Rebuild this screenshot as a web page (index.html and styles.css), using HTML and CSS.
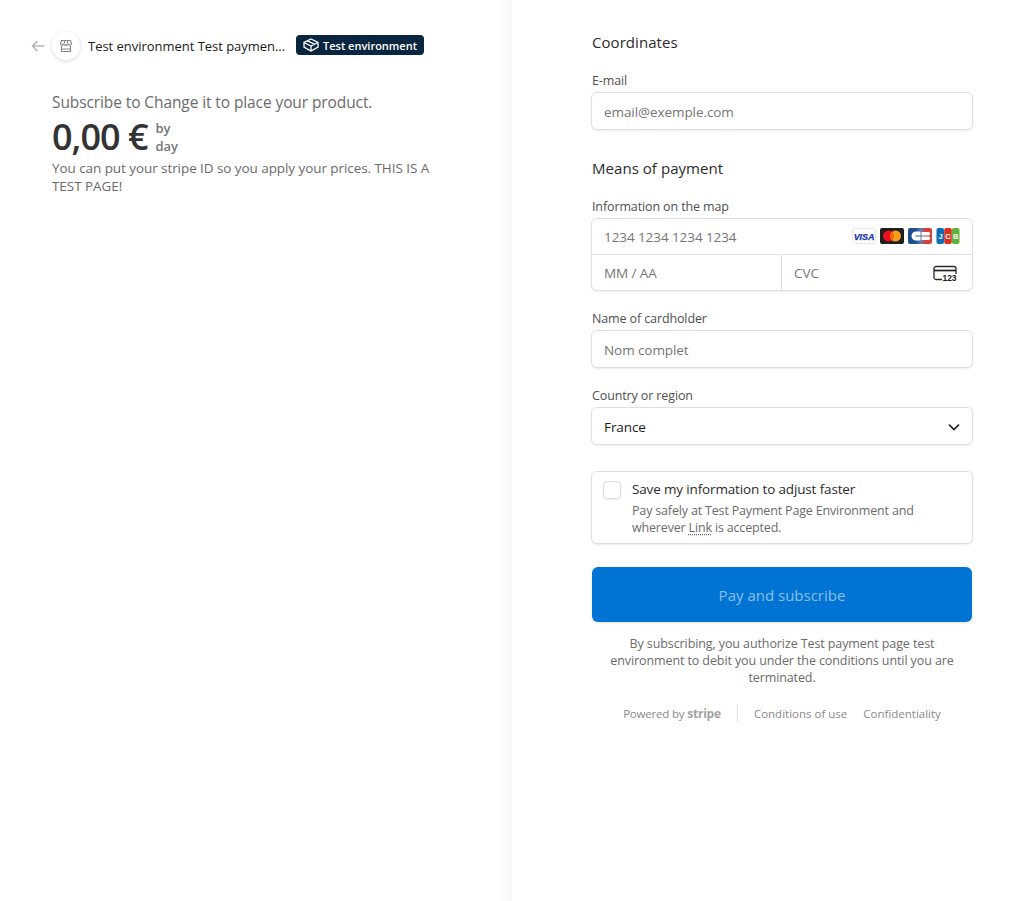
FILE: index.html
```html
<!DOCTYPE html>
<html lang="en">
<head>
    <meta charset="UTF-8">
    <title>Test payment page</title>
    <link rel="stylesheet" href="styles.css">
</head>
<body>
    <div class="page">
        <div class="summary">
            <div class="header">
                <svg class="back" width="14" height="12" viewBox="0 0 14 12" fill="none" stroke="#b5b5b5" stroke-width="1.6">
                    <path d="M13.5 6H1.5M6.5 1L1.5 6l5 5"/>
                </svg>
                <div class="logo">
                    <svg width="14" height="14" viewBox="0 0 14 14" fill="none" stroke="#8a8a8a" stroke-width="1.2">
                        <path d="M2.5 1.5h9l1 3.2a1.6 1.6 0 0 1-3 .6 1.7 1.7 0 0 1-2.5.4 1.7 1.7 0 0 1-2.5-.4 1.6 1.6 0 0 1-3-.6z"/>
                        <path d="M2.5 7v5.5h9V7M2.5 10h9M5.5 1.5v3M8.5 1.5v3"/>
                    </svg>
                </div>
                <span class="merchant">Test environment Test paymen...</span>
                <span class="badge">
                    <svg width="16" height="14" viewBox="0 0 16 14" fill="none" stroke="#fff" stroke-width="1.3">
                        <path d="M8 1l7 3.5v4.5L8 13 1 9V4.5zM1 4.5L8 8l7-3.5M8 8v5M4.5 2.8L11.5 6.2"/>
                    </svg>
                    Test environment
                </span>
            </div>
            <div class="product">
                <div class="product-name">Subscribe to Change it to place your product.</div>
                <div class="price-row">
                    <span class="price">0,00 €</span>
                    <span class="period">by<br>day</span>
                </div>
                <p class="description">You can put your stripe ID so you apply your prices. THIS IS A TEST PAGE!</p>
            </div>
        </div>

        <div class="checkout">
            <h2 class="section-title">Coordinates</h2>
            <label class="field-label">E-mail</label>
            <div class="input">email@exemple.com</div>

            <h2 class="section-title payment-title">Means of payment</h2>
            <label class="field-label">Information on the map</label>
            <div class="card-box">
                <div class="card-number">
                    <span>1234 1234 1234 1234</span>
                    <span class="brands">
                        <svg width="24" height="16" viewBox="0 0 24 16">
                            <rect x="0.5" y="0.5" width="23" height="15" rx="2" fill="#fff" stroke="#e6e6e6"/>
                            <text x="12" y="11.5" class="visa-text">VISA</text>
                        </svg>
                        <svg width="24" height="16" viewBox="0 0 24 16">
                            <rect width="24" height="16" rx="2" fill="#1f1f1f"/>
                            <circle cx="8.5" cy="8" r="5.5" fill="#e8101c"/>
                            <circle cx="15.5" cy="8" r="5.5" fill="#f79e1b"/>
                            <path d="M12 3.8a5.5 5.5 0 0 1 0 8.4 5.5 5.5 0 0 1 0-8.4z" fill="#ff5f00"/>
                        </svg>
                        <svg width="24" height="16" viewBox="0 0 24 16">
                            <defs>
                                <linearGradient id="cb" x1="0" x2="1" y1="0" y2="0">
                                    <stop offset="0.3" stop-color="#1d4f91"/>
                                    <stop offset="0.55" stop-color="#5f7fae"/>
                                    <stop offset="0.72" stop-color="#d8403c"/>
                                </linearGradient>
                            </defs>
                            <rect width="24" height="16" rx="2" fill="url(#cb)"/>
                            <path d="M12.5 3.5H8a4.5 4.5 0 0 0 0 9h4.5V8.4H7.5V7.6h5z" fill="#fff"/>
                            <path d="M13.5 4h7a1.8 1.8 0 0 1 0 3.6h-7zM13.5 8.4h7a1.8 1.8 0 0 1 0 3.6h-7z" fill="#fff"/>
                        </svg>
                        <svg width="24" height="16" viewBox="0 0 24 16">
                            <rect x="0.5" width="7.6" height="16" rx="2" fill="#0f6fb5"/>
                            <rect x="8.2" width="7.6" height="16" rx="2" fill="#d8321f"/>
                            <rect x="15.9" width="7.6" height="16" rx="2" fill="#5fb13d"/>
                            <text x="4.5" y="11" class="jcb-text">J</text>
                            <text x="12" y="11" class="jcb-text">C</text>
                            <text x="19.7" y="11" class="jcb-text">B</text>
                        </svg>
                    </span>
                </div>
                <div class="card-row">
                    <div class="card-cell expiry">MM / AA</div>
                    <div class="card-cell cvc">
                        <span>CVC</span>
                        <svg width="24" height="17" viewBox="0 0 24 17" fill="none">
                            <path d="M9 14.5H3a2 2 0 0 1-2-2v-9a2 2 0 0 1 2-2h18a2 2 0 0 1 2 2V9" stroke="#2a2a2a" stroke-width="1.3"/>
                            <path d="M1 5.5h22" stroke="#2a2a2a" stroke-width="1.8"/>
                            <text x="16.5" y="16" class="cvc-text">123</text>
                        </svg>
                    </div>
                </div>
            </div>

            <label class="field-label">Name of cardholder</label>
            <div class="input">Nom complet</div>

            <label class="field-label">Country or region</label>
            <div class="input select">
                <span>France</span>
                <svg width="12" height="8" viewBox="0 0 12 8" fill="none" stroke="#1a1a1a" stroke-width="1.6">
                    <path d="M1 1.5l5 5 5-5"/>
                </svg>
            </div>

            <div class="save-box">
                <span class="checkbox"></span>
                <div>
                    <div class="save-title">Save my information to adjust faster</div>
                    <div class="save-text">Pay safely at Test Payment Page Environment and<br>wherever <span class="link">Link</span> is accepted.</div>
                </div>
            </div>

            <button class="pay-button">Pay and subscribe</button>

            <p class="terms">By subscribing, you authorize Test payment page test environment to debit you under the conditions until you are terminated.</p>

            <div class="footer">
                <span class="powered">Powered by <b>stripe</b></span>
                <span class="divider"></span>
                <span>Conditions of use</span>
                <span>Confidentiality</span>
            </div>
        </div>
    </div>
</body>
</html>
```

FILE: styles.css
```css
* {
    box-sizing: border-box;
}
body {
    margin: 0;
    font-family: "Open Sans", "Noto Sans", sans-serif;
    color: #1a1a1a;
    background: #fff;
}
.page {
    display: flex;
    min-height: 901px;
}
.summary {
    width: 512px;
    padding: 32px 0 0 31px;
    background: linear-gradient(to left, #f9f9f9, #fff 16px);
}
.header {
    display: flex;
    align-items: center;
    height: 28px;
}
.back {
    margin-right: 7px;
}
.logo {
    width: 28px;
    height: 28px;
    border-radius: 50%;
    background: #fff;
    box-shadow: 0 1px 4px rgba(0, 0, 0, 0.16);
    display: flex;
    align-items: center;
    justify-content: center;
    margin-right: 8px;
}
.merchant {
    font-size: 13px;
    letter-spacing: -0.03px;
    color: #1a1a1a;
    width: 208px;
    white-space: nowrap;
}
.badge {
    display: flex;
    align-items: center;
    gap: 4px;
    height: 20px;
    margin-bottom: 2px;
    padding: 0 7px;
    border-radius: 4px;
    background: #0a2540;
    color: #fff;
    font-size: 11px;
    font-weight: 600;
    white-space: nowrap;
}
.product {
    padding: 31px 0 0 21px;
    width: 406px;
}
.product-name {
    font-size: 15.5px;
    line-height: 22px;
    letter-spacing: -0.1px;
    color: #6b6b6b;
}
.price-row {
    display: flex;
    align-items: center;
    gap: 8px;
    margin-top: 2px;
}
.price {
    font-size: 36px;
    line-height: 44px;
    font-weight: 600;
    letter-spacing: -1px;
    color: #333;
}
.period {
    font-size: 13px;
    line-height: 18px;
    font-weight: 600;
    color: #757575;
}
.description {
    margin: 0;
    font-size: 13.5px;
    line-height: 18px;
    letter-spacing: -0.07px;
    color: #6b6b6b;
}
.checkout {
    flex: 1;
    padding: 32px 0 0 79px;
}
.checkout > * {
    width: 382px;
}
.section-title {
    margin: 0;
    padding-left: 1px;
    font-size: 15px;
    line-height: 21px;
    font-weight: 400;
    letter-spacing: 0.05px;
    color: #2b2b2b;
}
.payment-title {
    margin-top: 28px;
}
.field-label {
    display: block;
    margin: 19px 0 3px;
    padding-left: 1px;
    font-size: 12.5px;
    line-height: 17px;
    letter-spacing: -0.12px;
    color: #4f4f4f;
}
.input,
.card-box,
.save-box {
    border: 1px solid #e0e0e0;
    border-radius: 6px;
    background: #fff;
    box-shadow: 0 1px 2px rgba(0, 0, 0, 0.08);
}
.input {
    height: 38px;
    display: flex;
    align-items: center;
    justify-content: space-between;
    padding: 1px 12px 0;
    font-size: 13.5px;
    letter-spacing: -0.08px;
    color: #757575;
}
.select {
    color: #1a1a1a;
}
.card-box {
    height: 73px;
}
.card-number {
    height: 36px;
    display: flex;
    align-items: center;
    justify-content: space-between;
    padding: 0 12px;
    font-size: 13.5px;
    letter-spacing: -0.08px;
    color: #757575;
    border-bottom: 1px solid #e0e0e0;
}
.brands {
    display: flex;
    gap: 4px;
    margin-bottom: 1px;
}
.visa-text {
    font: italic 700 9px "Liberation Sans", sans-serif;
    fill: #1a37a8;
    stroke: #1a37a8;
    stroke-width: 0.25;
    text-anchor: middle;
}
.jcb-text {
    font: 700 7.5px "Liberation Sans", sans-serif;
    fill: #fff;
    text-anchor: middle;
}
.cvc-text {
    font: 700 8.5px "Liberation Sans", sans-serif;
    fill: #1a1a1a;
    text-anchor: middle;
}
.card-row {
    display: flex;
    height: 36px;
    font-size: 13.5px;
    letter-spacing: -0.08px;
    color: #757575;
}
.card-cell {
    flex: 1;
    display: flex;
    align-items: center;
    justify-content: space-between;
    padding: 0 12px;
}
.expiry {
    flex: 0 0 190px;
    border-right: 1px solid #e0e0e0;
}
.cvc svg {
    margin-right: 3px;
}
.save-box {
    display: flex;
    gap: 11px;
    height: 73px;
    margin-top: 26px;
    padding: 8px 11px;
}
.checkbox {
    width: 18px;
    height: 18px;
    flex: none;
    margin-top: 1px;
    border: 1px solid #dcdcdc;
    border-radius: 4px;
    box-shadow: 0 1px 1px rgba(0, 0, 0, 0.06);
}
.save-title {
    font-size: 13.5px;
    line-height: 19px;
    letter-spacing: -0.15px;
    color: #2b2b2b;
}
.save-text {
    margin-top: 4px;
    font-size: 12.5px;
    line-height: 16.5px;
    letter-spacing: -0.17px;
    color: #6b6b6b;
}
.link {
    text-decoration: underline dotted;
    text-underline-offset: 2px;
}
.pay-button {
    display: block;
    width: 380px;
    height: 55px;
    margin: 23px 0 0 1px;
    border: 0;
    border-radius: 6px;
    background: #0074d4;
    box-shadow: 0 1px 3px rgba(0, 0, 0, 0.12);
    color: rgba(255, 255, 255, 0.55);
    font-family: inherit;
    font-size: 15px;
}
.terms {
    margin: 13px 0 0;
    padding: 0 12px;
    text-align: center;
    font-size: 12.5px;
    line-height: 17px;
    letter-spacing: -0.1px;
    color: #6b6b6b;
}
.footer {
    display: flex;
    align-items: center;
    justify-content: center;
    gap: 16px;
    height: 20px;
    margin-top: 17px;
    font-size: 11.5px;
    color: #8a8a8a;
}
.powered {
    letter-spacing: -0.2px;
}
.powered b {
    font-size: 12px;
    color: #a3a3a3;
}
.divider {
    width: 1px;
    height: 18px;
    background: #e0e0e0;
}
```
